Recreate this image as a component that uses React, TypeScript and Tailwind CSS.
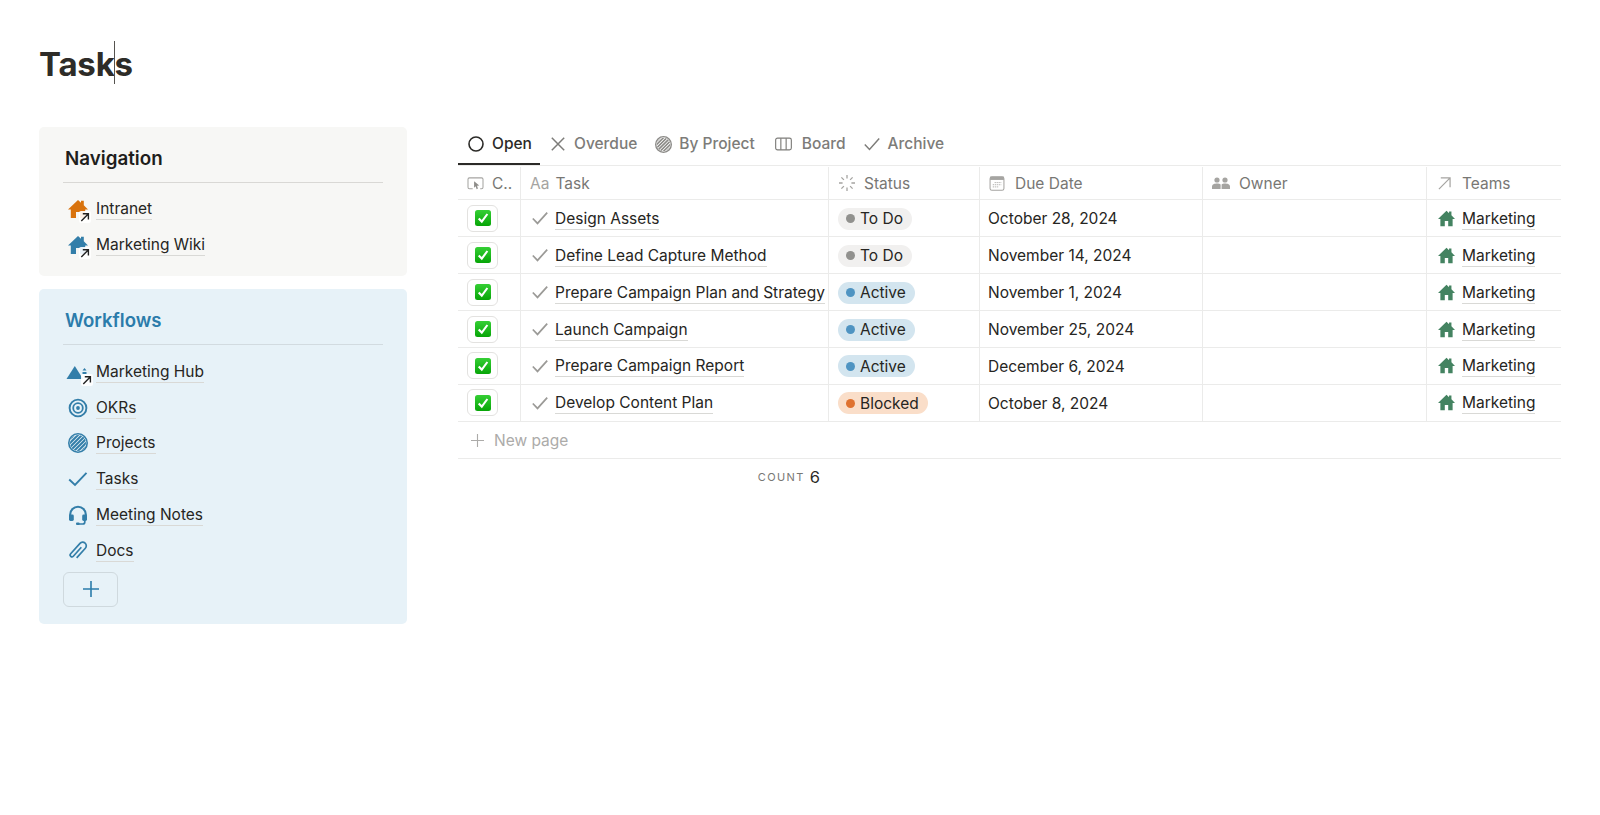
import React from "react";

function ShortcutArrow() {
  return (
    <svg viewBox="0 0 12 12" className="absolute right-[-3px] bottom-[-4px] w-[12px] h-[12px]">
      <rect x="0" y="0" width="12" height="12" rx="2" fill="#ffffff" fillOpacity="0.9" />
      <path d="M2.3 10 L9.2 3 M3.8 2.8 H9.4 V8.4" fill="none" stroke="#222" strokeWidth="1.4" />
    </svg>
  );
}

function HouseIcon({ color, className }: { color: string; className?: string }) {
  return (
    <svg viewBox="0 0 20 20" className={className}>
      <path d="M10 1 L13 3.8 V1.8 H15.8 V6.2 L20 10.6 H17.2 V19 H12 V13 H8 V19 H2.8 V10.6 H0 Z" fill={color} />
    </svg>
  );
}

function NavIcon({ name }: { name: string }) {
  const c = "#337ea9";
  if (name === "orange" || name === "blue") {
    return (
      <span className="relative block w-[20px] h-[20px]">
        <HouseIcon color={name === "orange" ? "#d9730d" : c} className="w-[20px] h-[20px]" />
        <ShortcutArrow />
      </span>
    );
  }
  if (name === "hub") {
    return (
      <span className="relative block w-[24px] h-[20px]">
        <svg viewBox="0 0 24 20" className="w-[24px] h-[20px]">
          <path d="M0.5 17 L8.8 4 L17 17 Z" fill={c} />
          <path d="M18.5 6 L20.5 8.4 H16.5 Z M16.5 10 H20.5 V12 H16.5 Z" fill={c} />
        </svg>
        <ShortcutArrow />
      </span>
    );
  }
  if (name === "okr") {
    return (
      <svg viewBox="0 0 20 20" className="w-[20px] h-[20px]" fill="none" stroke={c}>
        <circle cx="10" cy="10" r="8.4" strokeWidth="1.9" />
        <circle cx="10" cy="10" r="4.8" strokeWidth="1.8" />
        <circle cx="10" cy="10" r="1.9" fill={c} stroke="none" />
      </svg>
    );
  }
  if (name === "projects") return <HatchCircle color={c} className="w-[20px] h-[20px]" id="h1" sw="2" />;
  if (name === "tasks") {
    return (
      <svg viewBox="0 0 20 20" className="w-[20px] h-[20px]" fill="none" stroke={c} strokeWidth="1.9">
        <path d="M1.2 10.5 L7 16 L18.5 3.8" />
      </svg>
    );
  }
  if (name === "notes") {
    return (
      <svg viewBox="0 0 20 20" className="w-[20px] h-[20px]" fill="none" stroke={c}>
        <path d="M2.2 11 V9.5 A7.8 7.8 0 0 1 17.8 9.5 V11" strokeWidth="2.1" />
        <rect x="1" y="9.5" width="4.8" height="6.5" rx="1.4" fill={c} stroke="none" />
        <rect x="14.2" y="9.5" width="4.8" height="6.5" rx="1.4" fill={c} stroke="none" />
        <path d="M16.8 16 V17 A2 2 0 0 1 14.8 19 H9" strokeWidth="1.7" />
        <rect x="8" y="17.4" width="3.6" height="2.5" rx="1" fill={c} stroke="none" />
      </svg>
    );
  }
  return (
    <svg viewBox="0 0 20 20" className="w-[20px] h-[20px]" fill="none" stroke={c} strokeWidth="1.7">
      <g transform="rotate(42 10 10)">
        <path d="M10 5 V17 A1.8 1.8 0 0 1 6.4 17 V3 A3.6 3.6 0 0 1 13.6 3 V16" />
      </g>
    </svg>
  );
}

function HatchCircle({ color, className, id, sw = "1.5" }: { color: string; className?: string; id: string; sw?: string }) {
  return (
    <svg viewBox="0 0 20 20" className={className}>
      <defs>
        <clipPath id={id}>
          <circle cx="10" cy="10" r="8" />
        </clipPath>
      </defs>
      <circle cx="10" cy="10" r="9.2" fill="none" stroke={color} strokeWidth="1.6" />
      <g clipPath={`url(#${id})`} stroke={color} strokeWidth={sw}>
        <path d="M-2 6 L6 -2 M-2 10 L10 -2 M-2 14 L14 -2 M-2 18 L18 -2 M-2 22 L22 -2 M2 22 L22 2 M6 22 L22 6 M10 22 L22 10 M14 22 L22 14" />
      </g>
    </svg>
  );
}

function NavItem({ icon, label }: { icon: string; label: string }) {
  return (
    <div className="flex items-center h-[35.8px]">
      <div className="w-[24px] ml-[3px] flex justify-center shrink-0">
        <NavIcon name={icon} />
      </div>
      <span className="ml-[6px] text-[15.5px] leading-[21px] text-[#262522] border-b border-[#d9d9d6]">{label}</span>
    </div>
  );
}

function CheckBox() {
  return (
    <span className="flex items-center justify-center w-[31px] h-[27px] rounded-[6px] border border-[#e3e2e0] bg-white">
      <svg viewBox="0 0 16 16" className="w-[16px] h-[16px]">
        <defs>
          <linearGradient id="em" x1="0" y1="0" x2="0" y2="1">
            <stop offset="0" stopColor="#35cf35" />
            <stop offset="1" stopColor="#07a507" />
          </linearGradient>
        </defs>
        <rect width="16" height="16" rx="2.5" fill="url(#em)" />
        <path d="M3.7 8.4 L6.8 11.6 L12.4 4" fill="none" stroke="#fff" strokeWidth="2.1" />
      </svg>
    </span>
  );
}

const statusStyles: Record<string, { pill: string; dot: string }> = {
  "To Do": { pill: "bg-[#f1f0ef]", dot: "bg-[#91918e]" },
  Active: { pill: "bg-[#d3e5ef]", dot: "bg-[#4f94c2]" },
  Blocked: { pill: "bg-[#fadec9]", dot: "bg-[#df7230]" },
};

const rows = [
  ["Design Assets", "To Do", "October 28, 2024"],
  ["Define Lead Capture Method", "To Do", "November 14, 2024"],
  ["Prepare Campaign Plan and Strategy", "Active", "November 1, 2024"],
  ["Launch Campaign", "Active", "November 25, 2024"],
  ["Prepare Campaign Report", "Active", "December 6, 2024"],
  ["Develop Content Plan", "Blocked", "October 8, 2024"],
];

const grid = "grid grid-cols-[63px_308px_151px_223px_224px_134px]";
const cell = "flex items-center border-r border-[#ebebea] overflow-hidden";
const head = "text-[15.5px] text-[#787774] pt-[1px]";
const iconGrey = "#a5a4a1";

function HeadIcon({ name }: { name: string }) {
  if (name === "button")
    return (
      <svg viewBox="0 0 18 16" className="w-[17px] h-[15px]" fill="none">
        <path d="M6 13.5 H2.5 A1.5 1.5 0 0 1 1 12 V3.5 A1.5 1.5 0 0 1 2.5 2 H15.5 A1.5 1.5 0 0 1 17 3.5 V12 A1.5 1.5 0 0 1 15.5 13.5 H14" stroke={iconGrey} strokeWidth="1.1" />
        <path d="M7.5 5.5 L13 10 L10.6 10.4 L11.6 13.4 L10.2 14 L9.2 11 L7.5 12.6 Z" fill="#8d8c89" />
      </svg>
    );
  if (name === "status")
    return (
      <svg viewBox="0 0 18 18" className="w-[18px] h-[18px]" fill="none" stroke={iconGrey} strokeWidth="1.3">
        <path d="M9 1 V4.6 M9 13.4 V17 M1 9 H4.6 M13.4 9 H17 M3.4 3.4 L5.9 5.9 M12.1 12.1 L14.6 14.6 M3.4 14.6 L5.9 12.1 M12.1 5.9 L14.6 3.4" />
      </svg>
    );
  if (name === "date")
    return (
      <svg viewBox="0 0 16 16" className="w-[16px] h-[15px]" fill="none">
        <rect x="0.6" y="0.8" width="14.8" height="14.4" rx="2" stroke={iconGrey} strokeWidth="1.1" />
        <rect x="0.6" y="0.8" width="14.8" height="3.4" fill={iconGrey} />
        <path d="M5.5 7 H12.5 M3.5 9.3 H12.5 M3.5 11.6 H10" stroke={iconGrey} strokeWidth="1" strokeDasharray="1.2 0.9" />
      </svg>
    );
  if (name === "owner")
    return (
      <svg viewBox="0 0 18 12" className="w-[18px] h-[12px]" fill={iconGrey}>
        <circle cx="5" cy="3" r="2.6" />
        <circle cx="13" cy="3" r="2.6" />
        <path d="M0 12 V9.5 C0 7.2 2.5 6.4 5 6.4 C6.6 6.4 7.8 6.8 8.6 7.4 V12 Z" />
        <path d="M9.6 12 V7.4 C10.4 6.8 11.5 6.4 13 6.4 C15.5 6.4 18 7.2 18 9.5 V12 Z" />
      </svg>
    );
  return (
    <svg viewBox="0 0 14 14" className="w-[13px] h-[13px]" fill="none" stroke={iconGrey} strokeWidth="1.3">
      <path d="M1 13 L13 1 M3 1 H13 V11" />
    </svg>
  );
}

export default function App() {
  return (
    <div className="w-[1600px] h-[815px] bg-white overflow-hidden font-['Inter',sans-serif] pl-[39px]">
      <div className="h-[127px] pt-[43px]">
        <h1 className="relative inline-block text-[33px] leading-[42px] font-bold tracking-[-0.2px] text-[#2e2c28]">
          Tasks
          <span className="absolute left-[75px] top-[-2px] w-px h-[43px] bg-[#55534f]"></span>
        </h1>
      </div>
      <div className="flex">
        <div className="w-[368px] shrink-0 flex flex-col gap-[13px]">
          <section className="h-[149px] bg-[#f7f7f5] rounded-[5px] pl-[24px] pr-[24px] pt-[19px]">
            <h2 className="ml-[2px] h-[25px] text-[18.8px] leading-[25px] font-semibold text-[#1f1e1c]">Navigation</h2>
            <div className="mt-[11px] border-t border-[#d9d8d5]"></div>
            <div className="mt-[8px]">
              <NavItem icon="orange" label="Intranet" />
              <NavItem icon="blue" label="Marketing Wiki" />
            </div>
          </section>
          <section className="h-[335px] bg-[#e7f2f8] rounded-[5px] pl-[24px] pr-[24px] pt-[19px]">
            <h2 className="ml-[2px] h-[25px] text-[18.6px] leading-[25px] font-semibold text-[#2b7cab]">Workflows</h2>
            <div className="mt-[11px] border-t border-[#d2dbe0]"></div>
            <div className="mt-[9px]">
              <NavItem icon="hub" label="Marketing Hub" />
              <NavItem icon="okr" label="OKRs" />
              <NavItem icon="projects" label="Projects" />
              <NavItem icon="tasks" label="Tasks" />
              <NavItem icon="notes" label="Meeting Notes" />
              <NavItem icon="docs" label="Docs" />
            </div>
            <button className="mt-[3px] flex items-center justify-center w-[55px] h-[35px] rounded-[6px] border border-[#cfd9de]">
              <svg viewBox="0 0 16 16" className="w-[16px] h-[16px]" fill="none" stroke="#2b7cab" strokeWidth="1.6">
                <path d="M8 0 V16 M0 8 H16" />
              </svg>
            </button>
          </section>
        </div>

        <div className="ml-[51px] w-[1103px] shrink-0">
          <div className="flex h-[38px] items-start pt-[5px] text-[15.5px] font-medium text-[#7d7c79]">
            <div className="relative w-[82px] h-[33px] pl-[10px] flex items-start text-[#2b2a27]">
              <span className="flex items-center h-[24px] gap-[8px]">
                <svg viewBox="0 0 16 16" className="w-[16px] h-[16px]" fill="none" stroke="#2b2a27" strokeWidth="1.6">
                  <circle cx="8" cy="8" r="7" />
                </svg>
                Open
              </span>
              <span className="absolute left-0 right-0 bottom-0 h-[2px] bg-[#2b2a27]"></span>
            </div>
            <span className="flex items-center h-[24px] gap-[9px] ml-[11px]">
              <svg viewBox="0 0 14 14" className="w-[14px] h-[14px]" fill="none" stroke="#7d7c79" strokeWidth="1.5">
                <path d="M0.8 0.8 L13.2 13.2 M13.2 0.8 L0.8 13.2" />
              </svg>
              Overdue
            </span>
            <span className="flex items-center h-[24px] gap-[7px] ml-[18px]">
              <HatchCircle color="#8b8a87" className="w-[17px] h-[17px]" id="h2" sw="1.9" />
              By Project
            </span>
            <span className="flex items-center h-[24px] gap-[10px] ml-[20px]">
              <svg viewBox="0 0 18 14" className="w-[17px] h-[14px]" fill="none" stroke="#7d7c79" strokeWidth="1.2">
                <rect x="0.7" y="0.8" width="16.6" height="12.4" rx="2" />
                <path d="M6.2 0.8 V13.2 M11.8 0.8 V13.2" />
              </svg>
              Board
            </span>
            <span className="flex items-center h-[24px] gap-[8px] ml-[18px]">
              <svg viewBox="0 0 16 14" className="w-[16px] h-[14px]" fill="none" stroke="#7d7c79" strokeWidth="1.5">
                <path d="M0.8 7.5 L5.5 12.4 L15.2 1.6" />
              </svg>
              Archive
            </span>
          </div>

          <div className={`${grid} h-[35.4px] border-t border-b border-[#ebebea] ${head}`}>
            <div className={`${cell} pl-[9px] gap-[8px]`}>
              <HeadIcon name="button" />
              <span>C..</span>
            </div>
            <div className={`${cell} pl-[9px] gap-[6px]`}>
              <span className="text-[#a5a4a1]">Aa</span>
              <span>Task</span>
            </div>
            <div className={`${cell} pl-[9px] gap-[8px]`}>
              <HeadIcon name="status" />
              <span>Status</span>
            </div>
            <div className={`${cell} pl-[9px] gap-[10px]`}>
              <HeadIcon name="date" />
              <span>Due Date</span>
            </div>
            <div className={`${cell} pl-[9px] gap-[9px]`}>
              <HeadIcon name="owner" />
              <span>Owner</span>
            </div>
            <div className="flex items-center pl-[11px] gap-[11px]">
              <HeadIcon name="rel" />
              <span>Teams</span>
            </div>
          </div>

          {rows.map(([task, status, date]) => {
            const s = statusStyles[status];
            return (
              <div key={task} className={`${grid} h-[36.9px] border-b border-[#ebebea] text-[15.5px] text-[#262522]`}>
                <div className={`${cell} pl-[9px]`}>
                  <CheckBox />
                </div>
                <div className={`${cell} pl-[11px]`}>
                  <svg viewBox="0 0 16 14" className="w-[16px] h-[14px] shrink-0" fill="none" stroke="#9b9a97" strokeWidth="1.7">
                    <path d="M0.8 7.5 L5.5 12.4 L15.2 1.6" />
                  </svg>
                  <span className="ml-[7px] mt-[2px] whitespace-nowrap leading-[20px] border-b border-[#d9d9d6]">{task}</span>
                </div>
                <div className={`${cell} pl-[9px]`}>
                  <span className={`flex items-center h-[22px] mt-[1px] pl-[8px] pr-[9px] rounded-full ${s.pill}`}>
                    <span className={`w-[9px] h-[9px] rounded-full mr-[5px] ${s.dot}`}></span>
                    {status}
                  </span>
                </div>
                <div className={`${cell} pl-[8px] pt-[1px]`}>{date}</div>
                <div className={cell}></div>
                <div className="flex items-center pl-[11px]">
                  <HouseIcon color="#448361" className="w-[17px] h-[17px] shrink-0" />
                  <span className="ml-[7px] mt-[2px] leading-[20px] border-b border-[#d9d9d6]">Marketing</span>
                </div>
              </div>
            );
          })}

          <div className="flex items-center h-[37px] pt-[1px] pl-[13px] border-b border-[#ebebea] text-[15.5px] text-[#acaba9]">
            <svg viewBox="0 0 14 14" className="w-[13px] h-[13px]" fill="none" stroke="#acaba9" strokeWidth="1.2">
              <path d="M7 0 V14 M0 7 H14" />
            </svg>
            <span className="ml-[10px]">New page</span>
          </div>

          <div className="flex items-center h-[38px] w-[362px] justify-end">
            <span className="text-[11px] tracking-[1.4px] text-[#787774] mr-[5px]">COUNT</span>
            <span className="text-[16.5px] text-[#2b2a27]">6</span>
          </div>
        </div>
      </div>
    </div>
  );
}
